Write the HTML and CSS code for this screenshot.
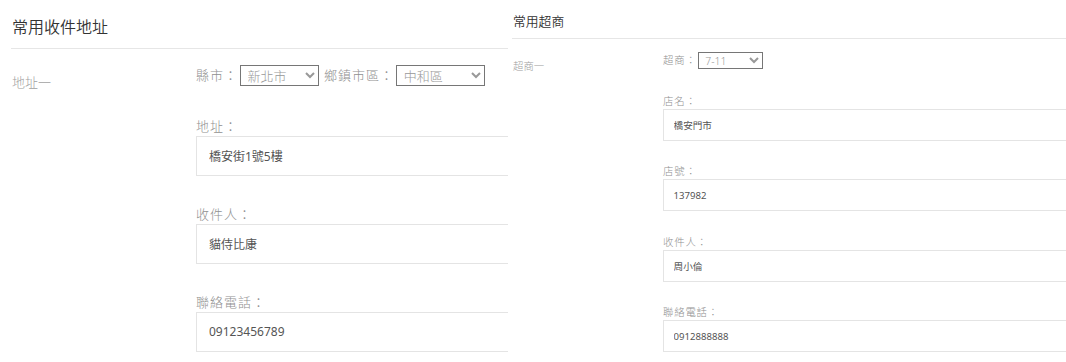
FILE: index.html
```html
<!DOCTYPE html>
<html lang="zh-TW">
<head>
    <meta charset="UTF-8">
    <meta name="viewport" content="width=device-width, initial-scale=1.0">
    <title>常用收件地址 / 常用超商</title>
    <link rel="stylesheet" href="styles.css">
</head>
<body>
    <div class="page">
        <section class="panel panel-addr">
            <div class="panel-inner">
                <h2 class="panel-title">常用收件地址</h2>
                <div class="entry">
                    <div class="entry-name">地址一</div>
                    <div class="entry-form">
                        <div class="pick-row">
                            <label class="pick-label" for="city">縣市：</label>
                            <select class="pick pick-city" id="city">
                                <option>新北市</option>
                            </select>
                            <label class="pick-label" for="area">鄉鎮市區：</label>
                            <select class="pick pick-area" id="area">
                                <option>中和區</option>
                            </select>
                        </div>
                        <div class="field">
                            <label class="field-label" for="addr">地址：</label>
                            <input class="field-input" id="addr" type="text" value="橋安街1號5樓">
                        </div>
                        <div class="field">
                            <label class="field-label" for="addrName">收件人：</label>
                            <input class="field-input" id="addrName" type="text" value="貓侍比康">
                        </div>
                        <div class="field">
                            <label class="field-label" for="addrPhone">聯絡電話：</label>
                            <input class="field-input" id="addrPhone" type="text" value="09123456789">
                        </div>
                    </div>
                </div>
            </div>
        </section>

        <section class="panel panel-store">
            <div class="panel-inner">
                <h2 class="panel-title">常用超商</h2>
                <div class="entry">
                    <div class="entry-name">超商一</div>
                    <div class="entry-form">
                        <div class="pick-row">
                            <label class="pick-label" for="store">超商：</label>
                            <select class="pick pick-store" id="store">
                                <option>7-11</option>
                            </select>
                        </div>
                        <div class="field">
                            <label class="field-label" for="storeName">店名：</label>
                            <input class="field-input" id="storeName" type="text" value="橋安門市">
                        </div>
                        <div class="field">
                            <label class="field-label" for="storeNo">店號：</label>
                            <input class="field-input" id="storeNo" type="text" value="137982">
                        </div>
                        <div class="field">
                            <label class="field-label" for="storeRecv">收件人：</label>
                            <input class="field-input" id="storeRecv" type="text" value="周小倫">
                        </div>
                        <div class="field">
                            <label class="field-label" for="storePhone">聯絡電話：</label>
                            <input class="field-input" id="storePhone" type="text" value="0912888888">
                        </div>
                    </div>
                </div>
            </div>
        </section>
    </div>
</body>
</html>
```

FILE: styles.css
```css
body {
    margin: 0;
    background-color: #fff;
    font-family: "Noto Sans", "Noto Sans CJK TC", sans-serif;
}
.page {
    display: flex;
    align-items: flex-start;
}
.panel {
    overflow: hidden;
    font-size: 16px;
}
.panel-addr {
    flex: none;
    width: 508px;
}
/* same form, shown at 80% */
.panel-store {
    flex: 1;
    font-size: 12.8px;
}
.panel-inner {
    width: 800px;
}
.panel-title {
    margin: 0 0 0 11px;
    padding: 1em 0 0.625em 1px;
    font-size: 1em;
    font-weight: 350;
    line-height: 1.375em;
    color: #333;
    border-bottom: 1px solid #e6e6e6;
}
.panel-store .panel-title {
    margin-left: 4px;
}

.entry {
    display: grid;
    grid-template-columns: 184px 1fr;
    padding: 1em 0 0 12px;
}
.panel-store .entry {
    grid-template-columns: 150px 1fr;
    padding-left: 5px;
}
.entry-name {
    margin-top: 0.538em;
    font-size: 0.8125em;
    font-weight: 300;
    line-height: 1.538em;
    color: #a0a0a0;
}

.pick-row {
    display: flex;
    align-items: center;
    height: 1.3125em;
}
.pick-label {
    margin-right: 0.154em;
    font-size: 0.8125em;
    font-weight: 300;
    letter-spacing: 0.077em;
    line-height: 1;
    color: #909090;
}
.pick {
    box-sizing: border-box;
    height: 1.615em;
    margin: 0 0.385em 0 0;
    padding: 0 0 0 0.2em;
    font-family: inherit;
    font-size: 0.8125em;
    font-weight: 300;
    color: #999;
    background-color: #fff;
}
.pick-city { width: 6.077em; }
.pick-area { width: 6.846em; }
.pick-store { width: 6.25em; }

.field {
    margin-top: 1.75em;
}
.pick-row + .field {
    margin-top: 1.875em;
}
.field-label {
    display: block;
    font-size: 0.8125em;
    font-weight: 300;
    letter-spacing: 0.077em;
    line-height: 1.538em;
    color: #909090;
}
.field-input {
    display: block;
    box-sizing: border-box;
    width: 100%;
    height: 3.333em;
    padding: 0 1em;
    font-family: inherit;
    font-size: 0.75em;
    color: #555;
    border: 1px solid #e4e4e4;
    border-radius: 0;
    outline: none;
}
```
